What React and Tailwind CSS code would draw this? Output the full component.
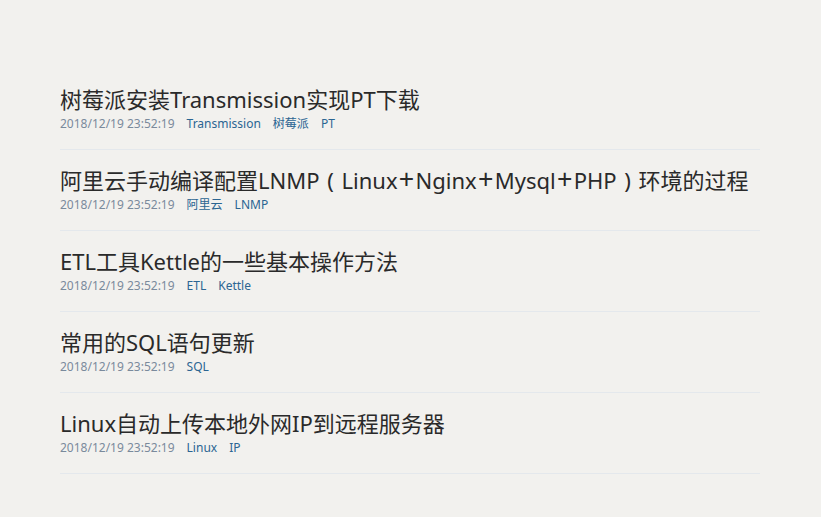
const P = ({ c }) => (
  <span className="inline-block w-[22px] text-center">{c}</span>
);
const Plus = () => (
  <span className="inline-block w-[18px] text-center text-[27px] leading-none">+</span>
);

const posts = [
  { title: "树莓派安装Transmission实现PT下载", tags: ["Transmission", "树莓派", "PT"] },
  {
    title: (
      <>
        阿里云手动编译配置LNMP<P c="(" />Linux<Plus />Nginx<Plus />Mysql<Plus />PHP<P c=")" />环境的过程
      </>
    ),
    tags: ["阿里云", "LNMP"],
  },
  { title: "ETL工具Kettle的一些基本操作方法", tags: ["ETL", "Kettle"] },
  { title: "常用的SQL语句更新", tags: ["SQL"] },
  { title: "Linux自动上传本地外网IP到远程服务器", tags: ["Linux", "IP"] },
];

export default function App() {
  return (
    <div
      className="min-h-[517px] w-full bg-[#f2f1ee] pt-[69px]"
      style={{ fontFamily: '"Noto Sans", "Noto Sans CJK SC", sans-serif' }}
    >
      <div className="ml-[60px] w-[700px]">
        {posts.map((p, i) => (
          <div key={i} className="border-b border-[#e4e8ec] pt-[15px] pb-[15px]">
            <div className="text-[22px] leading-[30px] text-[#2a2a2a] whitespace-nowrap">
              {p.title}
            </div>
            <div className="flex items-center gap-3 text-[12px] leading-[20px]">
              <span className="text-[#7a8a9c]">2018/12/19 23:52:19</span>
              {p.tags.map((t) => (
                <span key={t} className="text-[#2b6592]">{t}</span>
              ))}
            </div>
          </div>
        ))}
      </div>
    </div>
  );
}
